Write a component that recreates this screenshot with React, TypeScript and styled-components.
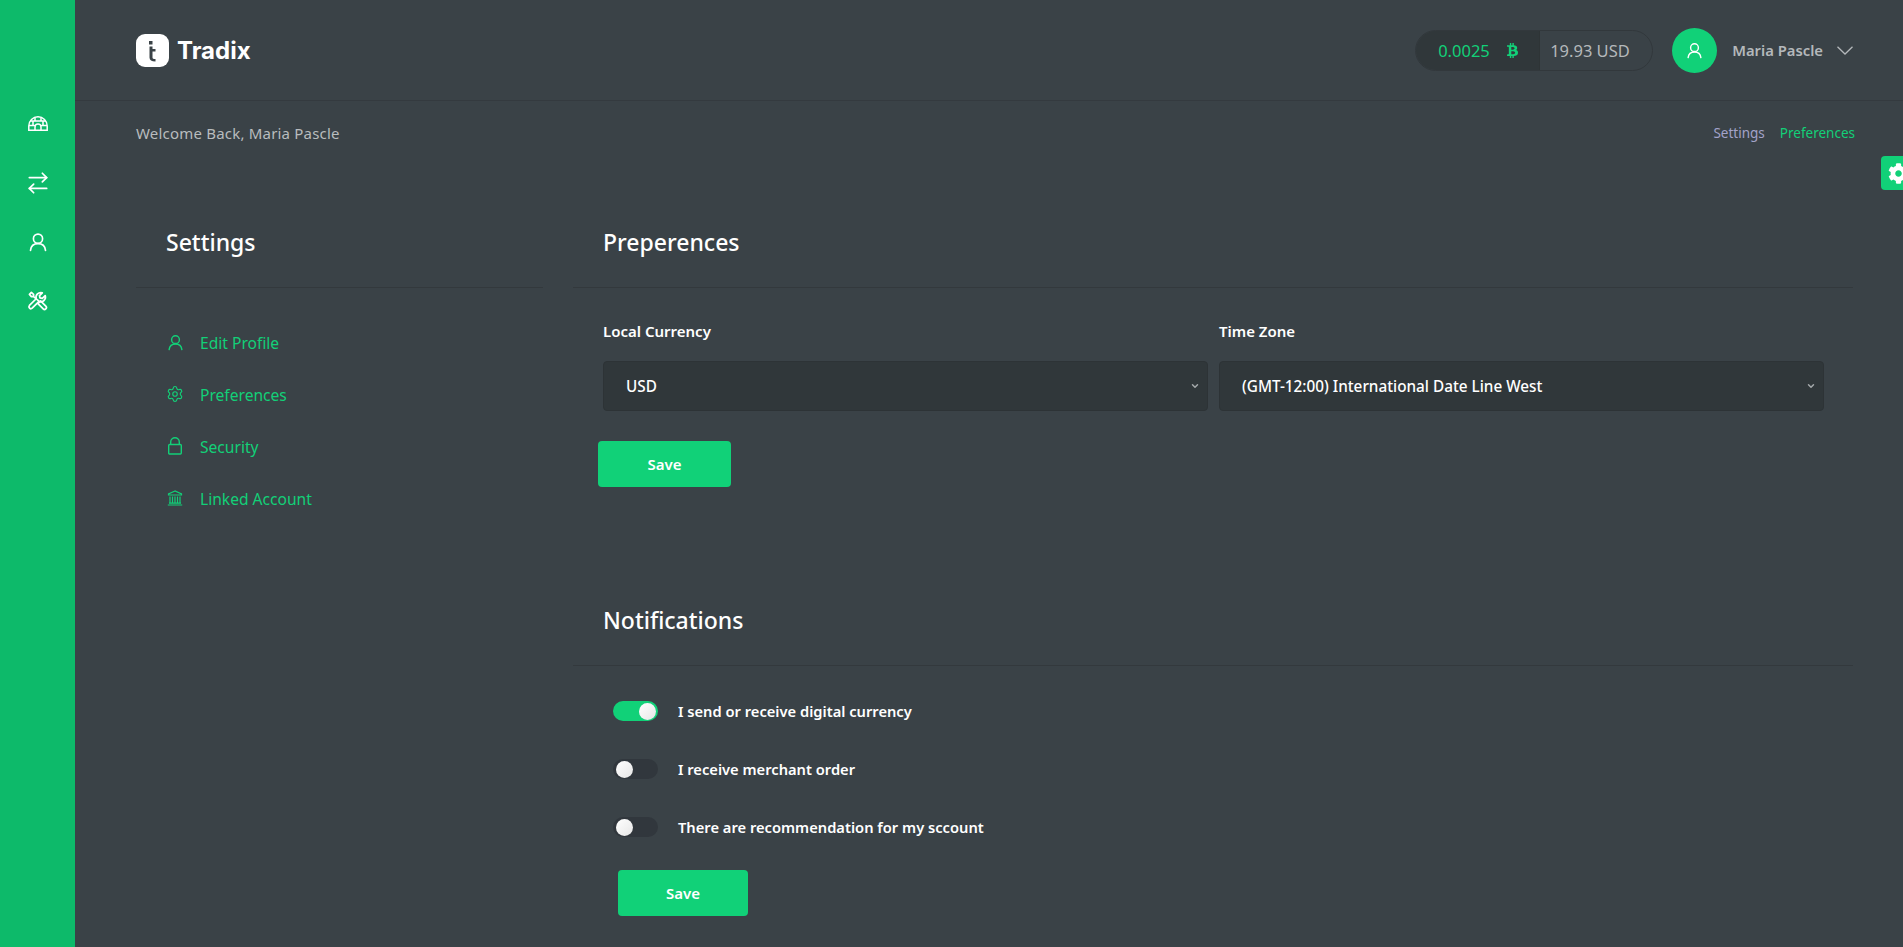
import { ReactNode } from 'react'
import styled, { createGlobalStyle } from 'styled-components'
import { FaBtc, FaCog } from 'react-icons/fa'
import { ArrowRightLeft, ChevronDown, Settings as GearIcon } from 'lucide-react'

const GlobalStyle = createGlobalStyle`
  html, body {
    margin: 0;
    padding: 0;
    background: #3a4247;
    font-family: "Noto Sans", "Open Sans", sans-serif;
    overflow: hidden;
  }
  * { box-sizing: border-box; }
`

const UserIcon = ({ size = 20 }: { size?: number }) => (
  <svg width={size} height={size} viewBox="0 0 24 24" fill="none" stroke="currentColor" strokeWidth="2" strokeLinecap="round">
    <circle cx="12" cy="8" r="5.5" />
    <path d="M3 22c.6-5 4-8 9-8s8.400 3 9 8" />
  </svg>
)

const IglooIcon = () => (
  <svg width="20" height="15" viewBox="0 0 20 15" fill="none" stroke="currentColor" strokeWidth="1.500">
    <path d="M.8 14.200V10a9.200 9.200 0 0 1 18.400 0v4.200z" />
    <path d="M2.500 5h15M1 9.500h5.500M13.500 9.500H19M7 1.500V5M13 1.500V5M5 5v4.500M15 5v4.500M7 14v-3a3 3 0 0 1 6 0v3" />
  </svg>
)

const ToolsIcon = () => (
  <svg width="21" height="21" viewBox="0 0 24 24" fill="none" stroke="currentColor" strokeWidth="2" strokeLinejoin="round">
    <path d="M12.500 15.500 15.500 12.500l6 6a2.100 2.100 0 0 1-3 3z" />
    <path d="M14 13 7.500 7.500V5L5 2.800 2.800 5 5 7.500h2.500" />
    <path d="M10.500 10 2.800 17.700a2.200 2.200 0 0 0 3.100 3.100l7.600-7.600a5.500 5.500 0 0 0 7.300-6.800L17.500 9.500 14.800 9l-.5-2.500 3.200-3.300a5.500 5.500 0 0 0-7 6.800z" />
  </svg>
)

const LogoGlyph = () => (
  <svg width="33" height="33" viewBox="0 0 33 33">
    <rect width="33" height="33" rx="9" fill="#fff" />
    <rect x="13" y="7" width="3.500" height="3.500" fill="#3a4247" />
    <path d="M13.500 12.500h3v2.500h3v2.500h-3v6c0 1 .7 1.500 3 1.500v2.500c-4 0-6-1.200-6-4z" fill="#3a4247" />
  </svg>
)

const LockIcon = () => (
  <svg width="16" height="18" viewBox="0 0 16 18" fill="none" stroke="currentColor" strokeWidth="1.400">
    <rect x="1.700" y="7.500" width="12.600" height="9.500" rx="1" />
    <path d="M3.700 7.500V5a4.300 4.300 0 0 1 8.600 0v2.500" />
  </svg>
)

const BankIcon = () => (
  <svg width="16" height="16" viewBox="0 0 16 16" fill="none" stroke="currentColor" strokeWidth="1.200">
    <path d="M8 1 1.500 4v1h13V4z" />
    <path d="M3 6.500v6M5.500 6.500v6M8 6.500v6M10.500 6.500v6M13 6.500v6M2 13.200h12M.8 15h14.400" />
  </svg>
)

const UserChevron = () => (
  <svg width="16" height="9" viewBox="0 0 16 9" fill="none" stroke="#b4b8bb" strokeWidth="1.300">
    <path d="M.5.8 8 8l7.500-7.200" />
  </svg>
)

const Page = styled.div`
  display: flex;
  height: 947px;
  overflow: hidden;
  position: relative;
`

const Rail = styled.aside`
  flex: 0 0 75px;
  background: #0dba6a;
  display: flex;
  flex-direction: column;
  align-items: center;
  padding-top: 113px;
  gap: 38px;
  color: #fff;
`

const RailIcon = styled.div`
  width: 21px;
  height: 21px;
  display: flex;
  align-items: center;
  justify-content: center;

  svg {
    flex: none;
  }
`

const Main = styled.main`
  flex: 1;
  min-width: 0;
`

const TopBar = styled.header`
  height: 101px;
  border-bottom: 1px solid #343a3f;
  padding: 0 50px 0 61px;
  display: flex;
  align-items: center;
  justify-content: space-between;
`

const Brand = styled.div`
  display: flex;
  align-items: center;
  gap: 8px;
  color: #fff;
  font-size: 24px;
  font-weight: 700;
  font-family: Inter, sans-serif;
`

const TopRight = styled.div`
  display: flex;
  align-items: center;
`

const Balance = styled.div`
  display: flex;
  height: 41px;
  width: 238px;
  border: 1px solid #32383c;
  border-radius: 21px;
  overflow: hidden;
  font-size: 16.500px;
  margin-right: 19px;
`

const Crypto = styled.div`
  width: 123px;
  background: #30373a;
  color: #12d078;
  display: flex;
  align-items: center;
  padding-left: 22px;
  gap: 15px;
`

const Fiat = styled.div`
  flex: 1;
  color: #b4b8bb;
  border-left: 1px solid #2e3436;
  display: flex;
  align-items: center;
  padding-left: 10px;
`

const Avatar = styled.div`
  width: 45px;
  height: 45px;
  border-radius: 50%;
  background: #11d178;
  color: #fff;
  display: flex;
  align-items: center;
  justify-content: center;
`

const UserName = styled.span`
  color: #b4b8bb;
  font-size: 14.800px;
  font-weight: 600;
  margin: 0 14px 0 15px;
`

const SubBar = styled.div`
  display: flex;
  justify-content: space-between;
  align-items: center;
  padding: 0 48px 0 61px;
  height: 64px;
  font-size: 15px;
  letter-spacing: 0.200px;
  color: #b8bcbe;
`

const Crumbs = styled.div`
  display: flex;
  gap: 15px;
  font-size: 13.500px;
  letter-spacing: 0;
`

const Crumb = styled.span<{ $active?: boolean }>`
  color: ${({ $active }) => ($active ? '#12d078' : '#a3a3c9')};
`

const Columns = styled.div`
  display: grid;
  grid-template-columns: 407px 1280px;
  column-gap: 30px;
  padding: 30px 0 0 61px;
`

const PanelHead = styled.div`
  height: 93px;
  padding: 2px 30px 0;
  border-bottom: 1px solid #33393d;
  display: flex;
  align-items: center;
  color: #fff;
  font-size: 23px;
  font-weight: 500;
`

const Menu = styled.nav`
  padding: 29px 30px 0;
  display: flex;
  flex-direction: column;
`

const MenuItem = styled.div`
  height: 52px;
  display: flex;
  align-items: center;
  color: #12d078;
  font-size: 15.600px;
  font-weight: 400;
`

const MenuIcon = styled.span`
  width: 18px;
  margin-right: 16px;
  display: flex;
  justify-content: center;
  position: relative;
  top: -1px;
`

const FormBody = styled.div`
  padding: 25px 30px 0;
`

const FieldGrid = styled.div`
  display: grid;
  grid-template-columns: 605px 605px;
  column-gap: 11px;
`

const Label = styled.label`
  display: block;
  color: #fff;
  font-size: 15px;
  font-weight: 600;
  line-height: 36px;
  margin-bottom: 12px;
`

const Select = styled.div`
  height: 50px;
  background: #30373a;
  border: 1px solid #2d3336;
  border-radius: 4px;
  padding: 0 7px 0 22px;
  color: #fff;
  font-size: 15.300px;
  font-weight: 500;
  display: flex;
  align-items: center;
  justify-content: space-between;
`

const Caret = styled(ChevronDown)`
  color: #a5a9ab;
`

const SaveButton = styled.button<{ $wide?: boolean; $offset: number }>`
  display: block;
  width: ${({ $wide }) => ($wide ? 133 : 130)}px;
  height: 46px;
  margin-left: ${({ $offset }) => $offset}px;
  background: #11d178;
  color: #fff;
  border: 0;
  border-radius: 4px;
  font-family: inherit;
  font-size: 15px;
  font-weight: 600;
`

const PreferenceActions = styled.div`
  margin: 30px 0 0 -5px;
`

const NotificationsPanel = styled.section`
  margin-top: 86px;
`

const ToggleList = styled.div`
  padding: 16px 40px 0;
`

const ToggleRow = styled.div`
  height: 58px;
  display: flex;
  align-items: center;
  gap: 20px;
  color: #fff;
  font-size: 14.700px;
  font-weight: 600;
`

const Track = styled.span<{ $on?: boolean }>`
  width: 45px;
  height: 20px;
  border-radius: 10px;
  background: ${({ $on }) => ($on ? '#11d178' : '#31373d')};
  display: flex;
  align-items: center;
  padding: 0 ${({ $on }) => ($on ? 2 : 3)}px;
  justify-content: ${({ $on }) => ($on ? 'flex-end' : 'flex-start')};
`

const Knob = styled.span`
  width: 17px;
  height: 17px;
  border-radius: 50%;
  background: linear-gradient(135deg, #fff, #e6e6e6);
`

const NotificationActions = styled.div`
  margin-top: 14px;
`

const SideTab = styled.div`
  position: absolute;
  right: 0;
  top: 156px;
  width: 22px;
  height: 34px;
  background: #11d178;
  border-radius: 4px 0 0 4px;
  color: #fff;
  overflow: hidden;
  display: flex;
  align-items: center;
  padding-left: 7px;
  font-size: 21px;

  svg {
    flex: none;
  }
`

const railIcons: ReactNode[] = [
  <IglooIcon key="igloo" />,
  <ArrowRightLeft key="swap" size={26} strokeWidth={1.600} />,
  <UserIcon key="user" size={20} />,
  <ToolsIcon key="tools" />,
]

const menuItems: { label: string; icon: ReactNode }[] = [
  { label: 'Edit Profile', icon: <UserIcon size={17} /> },
  { label: 'Preferences', icon: <GearIcon size={18} strokeWidth={1.500} /> },
  { label: 'Security', icon: <LockIcon /> },
  { label: 'Linked Account', icon: <BankIcon /> },
]

const toggles = [
  { label: 'I send or receive digital currency', on: true },
  { label: 'I receive merchant order', on: false },
  { label: 'There are recommendation for my sccount', on: false },
]

export default function App() {
  return (
    <Page>
      <GlobalStyle />
      <Rail>
        {railIcons.map((icon, i) => (
          <RailIcon key={i}>{icon}</RailIcon>
        ))}
      </Rail>
      <Main>
        <TopBar>
          <Brand>
            <LogoGlyph />
            Tradix
          </Brand>
          <TopRight>
            <Balance>
              <Crypto>
                0.0025 <FaBtc size={15} />
              </Crypto>
              <Fiat>19.93 USD</Fiat>
            </Balance>
            <Avatar>
              <UserIcon size={17} />
            </Avatar>
            <UserName>Maria Pascle</UserName>
            <UserChevron />
          </TopRight>
        </TopBar>
        <SubBar>
          <span>Welcome Back, Maria Pascle</span>
          <Crumbs>
            <Crumb>Settings</Crumb>
            <Crumb $active>Preferences</Crumb>
          </Crumbs>
        </SubBar>
        <Columns>
          <section>
            <PanelHead>Settings</PanelHead>
            <Menu>
              {menuItems.map((item) => (
                <MenuItem key={item.label}>
                  <MenuIcon>{item.icon}</MenuIcon>
                  {item.label}
                </MenuItem>
              ))}
            </Menu>
          </section>
          <div>
            <section>
              <PanelHead>Preperences</PanelHead>
              <FormBody>
                <FieldGrid>
                  <div>
                    <Label>Local Currency</Label>
                    <Select>
                      USD <Caret size={10} strokeWidth={3.500} />
                    </Select>
                  </div>
                  <div>
                    <Label>Time Zone</Label>
                    <Select>
                      (GMT-12:00) International Date Line West <Caret size={10} strokeWidth={3.500} />
                    </Select>
                  </div>
                </FieldGrid>
                <PreferenceActions>
                  <SaveButton $wide $offset={0}>
                    Save
                  </SaveButton>
                </PreferenceActions>
              </FormBody>
            </section>
            <NotificationsPanel>
              <PanelHead>Notifications</PanelHead>
              <ToggleList>
                {toggles.map((t) => (
                  <ToggleRow key={t.label}>
                    <Track $on={t.on}>
                      <Knob />
                    </Track>
                    {t.label}
                  </ToggleRow>
                ))}
                <NotificationActions>
                  <SaveButton $offset={5}>Save</SaveButton>
                </NotificationActions>
              </ToggleList>
            </NotificationsPanel>
          </div>
        </Columns>
      </Main>
      <SideTab>
        <FaCog />
      </SideTab>
    </Page>
  )
}
